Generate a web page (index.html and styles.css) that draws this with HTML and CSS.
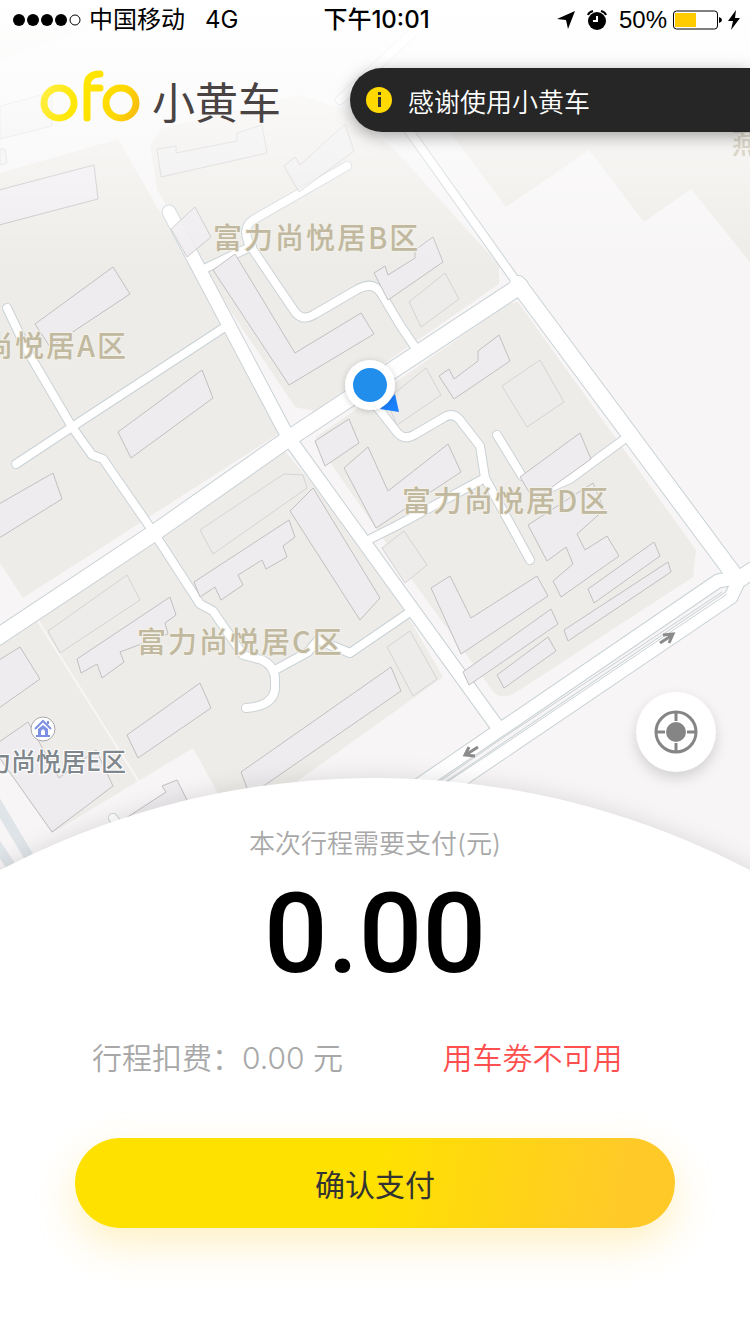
FILE: index.html
```
<!DOCTYPE html>
<html lang="zh-CN">
<head>
    <meta charset="UTF-8">
    <meta name="viewport" content="width=device-width, initial-scale=1.0">
    <title>ofo 小黄车</title>
    <link rel="stylesheet" href="styles.css">
</head>
<body>
    <main class="app">
        <!-- Map -->
        <svg class="map" viewBox="0 0 750 900" preserveAspectRatio="xMidYMin slice" role="img" aria-label="地图">
            <defs>
                <linearGradient id="fade" x1="0" y1="0" x2="0" y2="1">
                    <stop offset="0" stop-color="#fff" />
                    <stop offset="0.25" stop-color="#fff" stop-opacity="0.8" />
                    <stop offset="1" stop-color="#fff" stop-opacity="0" />
                </linearGradient>
                <filter id="soft" x="-30%" y="-30%" width="160%" height="160%">
                    <feDropShadow dx="0" dy="1" stdDeviation="3" flood-opacity="0.2" />
                </filter>
                <g id="main-roads">
                    <path d="M-10 642L154 533L288 439L520 286" />
                    <path d="M518 284L738 580L765 562" />
                </g>
                <g id="side-roads">
                    <path d="M169 212L288 437L499 729" />
                    <path d="M735 578L718 581L400 798" />
                    <path d="M740 578L731 597L430 801" />
                </g>
                <g id="lanes">
                    <path d="M375 83L518 284" />
                    <path d="M340 100L470 -20" />
                    <path d="M7 308L28 352L72 427L92 455L103 459L154 533L200 604L213 611L243 655L262 660Q275 666 275 680V688Q274 706 246 708" />
                    <path d="M16 464L72 427L225 327" />
                    <path d="M275 670L308 652L318 640L350 653L410 612" />
                    <path d="M347 166L253 220Q242 227 249 244L293 309Q301 323 315 314L358 289Q373 281 381 293L400 325L417 350" />
                    <path d="M252 246L206 268" />
                    <path d="M370 398L396 431Q403 441 414 435L443 418Q452 412 459 419L480 446L485 478L530 560" />
                    <path d="M366 541L396 526L485 478" />
                    <path d="M497 435L522 476" />
                    <path d="M545 490L570 479L630 435" />
                    <path d="M113 818L140 852" />
                </g>
            </defs>

            <rect class="ground" width="750" height="900" />

            <!-- Residential blocks -->
            <g class="block">
                <path d="M0 173L118 139L282 425Q282 432 275 436L23 598L0 563Z" />
                <path d="M150 145L162 128L300 95L345 110L395 150L499 265V284L315 411L295 407L230 310L157 190Z" />
                <path d="M0 646L38 621L284 450L372 555L443 677L285 790L220 797L193 748L52 833L0 760Z" />
                <path d="M508 304L518 302L696 550L693 577L515 693Q500 701 492 690L412 580L318 445L316 437L380 393Z" />
                <path d="M415 85L506 207L589 150L644 222L691 189L750 262V85Z" />
                <path d="M0 0H170L0 60Z" />
            </g>
            <path class="seam" d="M38 621L139 782" />
            <path class="rail" d="M-5 800L32 862M-10 835L15 872" />

            <!-- Roads: casing first, white fill on top -->
            <g class="casing">
                <use href="#lanes" stroke-width="10" />
                <use href="#side-roads" stroke-width="15" />
                <use href="#main-roads" stroke-width="18" />
            </g>
            <g class="road">
                <use href="#lanes" stroke-width="8" />
                <use href="#side-roads" stroke-width="13" />
                <use href="#main-roads" stroke-width="16" />
            </g>
            <path class="divider" d="M436 784L501 739L722 592M444 784L503 745L727 594" />

            <!-- Buildings -->
            <g class="building">
                <path d="M0 106L52 92V126L0 139Z" opacity="0.5" />
                <path d="M0 149H5L7 163L0 165Z" opacity="0.5" />
                <path d="M-1 190L94 165L98 199L-1 225Z" />
                <path d="M157 149L176 146V153L237 141V133L262 125L267 153L161 177Z" opacity="0.7" />
                <path d="M284 166L295 157L300 165L345 124L354 151L299 192Z" opacity="0.7" />
                <path d="M171 229L195 207L211 237L187 257Z" opacity="0.9" />
                <path d="M35 324L113 267L130 294L50 347Z" />
                <path d="M118 432L202 370L213 398L131 458Z" />
                <path d="M-1 504L53 473L62 499L-1 538Z" />
                <path d="M213 270L235 254L295 353L361 313L374 334L289 385Z" />
                <path d="M374 273L385 266L388 275L415 258V250L433 237L443 262L388 300Z" />
                <path d="M439 376L449 369L454 379L478 361V351L499 335L510 361L454 399Z" />
                <path d="M315 441L349 419L359 443L325 466Z" />
                <path d="M344 468L368 447L388 491L448 444L461 472L376 528Z" />
                <path d="M520 477L580 433L591 459L534 500Z" />
                <path d="M528 525L593 483L604 510L577 534L585 550L607 536L619 556L561 597L553 581L573 564L566 547L547 561Z" />
                <path d="M588 589L654 542L660 556L594 603Z" />
                <path d="M564 630L668 562L671 572L568 641Z" />
                <path d="M431 588L450 576L471 618L537 576L548 596L461 654Z" />
                <path d="M463 672L551 609L558 624L469 685Z" />
                <path d="M497 675L548 637L556 651L504 688Z" />
                <path d="M290 511L313 488L380 598L360 620Z" />
                <path d="M194 582L289 520L295 537L283 546L287 557L266 569L262 560L238 575L243 585L221 600L215 587L200 597Z" />
                <path d="M77 659L170 597L176 615L165 623L168 634L120 652L124 662L102 678L97 664L81 673Z" />
                <path d="M-1 660L20 647L40 679L-1 708Z" />
                <path d="M127 735L200 683L211 708L138 758Z" />
                <path d="M-1 742L28 722L59 778L96 750L113 786L52 832L-1 757Z" />
                <path d="M241 772L391 667L401 691L265 785L250 796Z" />
                <path d="M120 822L166 792L162 786L177 780L190 806L150 840Z" />
            </g>
            <g class="building faint">
                <path d="M409 302L445 273L459 299L421 327Z" />
                <path d="M386 400L426 368L441 395L397 425Z" />
                <path d="M502 386L540 360L564 402L527 427Z" />
                <path d="M200 530L284 474L303 475L307 488L213 554Z" />
                <path d="M48 631L127 575L140 600L60 653Z" />
                <path d="M382 548L404 531L427 565L405 583Z" />
                <path d="M387 647L410 631L437 679L413 696Z" />
            </g>

            <!-- One-way arrows -->
            <g class="arrow">
                <path d="M660 643L671 636" />
                <path d="M663 635L673 634L669 643" />
                <path d="M478 747L467 754" />
                <path d="M469 747L465 755L475 756" />
            </g>

            <rect width="750" height="270" fill="url(#fade)" />

            <!-- Place names -->
            <g class="place">
                <text x="213" y="249">富力尚悦居B区</text>
                <text x="402" y="512">富力尚悦居D区</text>
                <text x="137" y="653">富力尚悦居C区</text>
                <text x="128" y="357" text-anchor="end">富力尚悦居A区</text>
                <text x="732" y="154" opacity="0.5">燕</text>
            </g>
            <text class="poi" x="126" y="771" text-anchor="end">富力尚悦居E区</text>
            <g>
                <circle cx="43" cy="729" r="12" fill="#fff" stroke="#a9a9ad" />
                <path d="M35 729L43 721L51 729M48 724V721" fill="none" stroke="#7d90e4" stroke-width="2" />
                <path d="M38 729L43 725L48 729V735H50V737H36V735H38ZM41 735H45V731L43 729L41 731Z" fill="#7d90e4" fill-rule="evenodd" />
            </g>

            <!-- My location -->
            <path d="M399 412L380 409L395 394Z" fill="#1a80ff" />
            <circle cx="370" cy="385" r="25" fill="#fff" filter="url(#soft)" />
            <circle cx="370" cy="385" r="17" fill="#218eec" />
        </svg>

        <header class="status-bar">
            <div class="carrier">
                <svg width="68" height="12" viewBox="0 0 68 12" aria-hidden="true">
                    <circle cx="6" cy="6" r="6" />
                    <circle cx="20" cy="6" r="6" />
                    <circle cx="34" cy="6" r="6" />
                    <circle cx="48" cy="6" r="6" />
                    <circle cx="62" cy="6" r="5" fill="none" stroke="#000" />
                </svg>
                <span>中国移动</span>
                <span class="network">4G</span>
            </div>
            <time class="clock">下午10:01</time>
            <div class="power">
                <svg width="18" height="18" viewBox="0 0 18 18" aria-hidden="true">
                    <path d="M18 0L11 18L9 9L0 8Z" />
                </svg>
                <svg class="alarm" width="20" height="20" viewBox="0 0 20 20" aria-hidden="true">
                    <circle cx="10" cy="11" r="9" />
                    <path d="M1 5Q2 2 6 1M19 5Q18 2 14 1" fill="none" stroke="#000" stroke-width="2" />
                    <path d="M10 6V11H6" fill="none" stroke="#fff" stroke-width="2" />
                </svg>
                <span class="percent">50%</span>
                <svg width="49" height="20" viewBox="0 0 49 20" aria-hidden="true">
                    <rect x="0.5" y="1" width="44" height="18" rx="3" fill="#fff" stroke="#000" />
                    <rect x="2" y="3" width="21" height="14" fill="#fc0" />
                    <path d="M46 7Q49 8 49 10T46 13Z" />
                </svg>
                <svg width="12" height="20" viewBox="0 0 12 20" aria-hidden="true">
                    <path d="M8 0L0 11H5L3 20L12 8H7Z" />
                </svg>
            </div>
        </header>

        <div class="top-bar">
            <div class="brand">
                <svg width="102" height="60" viewBox="0 0 102 60" role="img" aria-label="ofo">
                    <defs>
                        <linearGradient id="gold" gradientUnits="userSpaceOnUse" x1="0" y1="10" x2="102" y2="50">
                            <stop offset="0" stop-color="#fff04d" />
                            <stop offset="0.4" stop-color="#ffe600" />
                            <stop offset="0.75" stop-color="#ffd800" />
                            <stop offset="1" stop-color="#f4b413" />
                        </linearGradient>
                    </defs>
                    <g fill="none" stroke="url(#gold)" stroke-width="7" stroke-linecap="round">
                        <circle cx="19" cy="33" r="15" />
                        <circle cx="81" cy="33" r="15" />
                        <path d="M47 48V16Q47 4 60 4M47 18H60" />
                    </g>
                </svg>
                <span class="brand-name">小黄车</span>
            </div>
            <div class="toast" role="status">
                <svg width="26" height="26" viewBox="0 0 26 26" aria-hidden="true">
                    <circle cx="13" cy="13" r="13" fill="#ffd900" />
                    <path d="M12 5H15V8H12ZM12 10H15V20H12Z" fill="#333" />
                </svg>
                <span>感谢使用小黄车</span>
            </div>
        </div>

        <div class="map-tools">
            <button class="locate" type="button" aria-label="定位">
                <svg width="44" height="44" viewBox="0 0 44 44" fill="none" stroke="#858585" aria-hidden="true">
                    <circle cx="22" cy="22" r="20" stroke-width="3" />
                    <circle cx="22" cy="22" r="10" fill="#858585" stroke="none" />
                    <path d="M22 2V11M22 33V42M2 22H11M33 22H42" stroke-width="3" />
                </svg>
            </button>
        </div>

        <section class="panel">
            <h1 class="panel-title">本次行程需要支付(元)</h1>
            <p class="amount">0.00</p>
            <div class="details">
                <span class="fee">行程扣费：0.00 元</span>
                <span class="coupon">用车劵不可用</span>
            </div>
            <button class="pay" type="button">确认支付</button>
        </section>
    </main>
</body>
</html>
```
FILE: styles.css
```
* {
    box-sizing: border-box;
}
body {
    margin: 0;
    font-family: Inter, "Noto Sans CJK SC", sans-serif;
    color: #000;
}
button {
    border: none;
    font-family: inherit;
    cursor: pointer;
}
.app {
    position: relative;
    z-index: 0;
    display: flex;
    flex-direction: column;
    min-height: 100vh;
    overflow: hidden;
    background-color: #f6f5f5;
}

/* Map */
.map {
    position: absolute;
    top: 0;
    left: 0;
    z-index: -2;
    width: 100%;
}
.ground {
    fill: #f7f5f5;
}
.block {
    fill: #eeece8;
}
.seam {
    stroke: #f8f7f6;
    stroke-width: 2;
}
.rail {
    stroke: #dfe4e8;
    stroke-width: 10;
}
.casing, .road {
    fill: none;
    stroke-linecap: round;
    stroke-linejoin: round;
}
.casing {
    stroke: #c9d2d6;
}
.road {
    stroke: #fff;
}
.divider {
    fill: none;
    stroke: #c9d0d2;
}
.building {
    fill: #efecef;
    stroke: #c2bfc1;
}
.faint {
    fill: #eeebeb;
    stroke: #d6d3d5;
}
.arrow {
    fill: none;
    stroke: #8b8b8b;
    stroke-width: 3;
}
.place, .poi {
    font-family: "Noto Sans CJK SC", sans-serif;
    font-weight: 500;
    paint-order: stroke;
    stroke: #f3f1ea;
    stroke-width: 2px;
}
.place {
    font-size: 29px;
    letter-spacing: 2px;
    fill: #c1b99f;
}
.poi {
    font-size: 25px;
    fill: #7f878d;
    stroke: #fff;
}

/* Status bar */
.status-bar {
    display: grid;
    grid-template-columns: 1fr auto 1fr;
    align-items: center;
    height: 40px;
    padding: 0 10px 0 13px;
    font-size: 24px;
    line-height: 40px;
}
.carrier, .power {
    display: flex;
    align-items: center;
    gap: 8px;
}
.power {
    justify-content: flex-end;
    gap: 6px;
}
.network {
    margin-left: 12px;
}
.clock {
    font-weight: 500;
}
.alarm {
    margin: 0 6px;
}
.percent {
    font-family: "Liberation Sans", sans-serif;
}

/* Logo and toast */
.top-bar {
    display: flex;
    justify-content: space-between;
    align-items: center;
    margin-top: 28px;
    padding-left: 40px;
}
.brand {
    display: flex;
    align-items: center;
    gap: 10px;
}
.brand-name {
    font-family: "Noto Sans CJK SC", sans-serif;
    font-size: 43px;
    line-height: 64px;
    color: #4a4343;
}
.toast {
    display: flex;
    align-items: center;
    gap: 16px;
    flex: 0 1 400px;
    height: 64px;
    padding-left: 16px;
    border-radius: 32px 0 0 32px;
    background-color: #262626;
    box-shadow: 0 4px 16px rgba(0, 0, 0, 0.35);
    font-family: "Noto Sans CJK SC", sans-serif;
    font-size: 26px;
    font-weight: 350;
    color: #fff;
}

/* Map controls */
.map-tools {
    display: flex;
    flex: 1;
    justify-content: flex-end;
    align-items: flex-end;
    padding: 0 34px 6px;
}
.locate {
    display: flex;
    justify-content: center;
    align-items: center;
    width: 80px;
    height: 80px;
    padding: 0;
    border-radius: 50%;
    background-color: #fff;
    box-shadow: 0 6px 14px rgba(0, 0, 0, 0.15);
}

/* Payment panel */
.panel {
    position: relative;
    padding: 48px 60px 106px;
    text-align: center;
}
.panel::before {
    content: "";
    position: absolute;
    top: 0;
    left: 50%;
    z-index: -1;
    width: 1620px;
    height: 1620px;
    margin-left: -810px;
    border-radius: 50%;
    background-color: #fff;
    box-shadow: 0 0 24px rgba(0, 0, 0, 0.12);
}
.panel-title {
    margin: 0;
    font-size: 26px;
    font-weight: 350;
    line-height: 36px;
    color: #a8a8a8;
}
.amount {
    margin: 24px 0 0;
    font-family: Roboto, sans-serif;
    font-size: 112px;
    font-weight: 500;
    line-height: 96px;
}
.details {
    display: grid;
    grid-template-columns: 1fr 1fr;
    margin-top: 56px;
    font-size: 30px;
    font-weight: 350;
    line-height: 40px;
}
.fee {
    color: #a8a8a8;
}
.coupon {
    color: #ff5050;
}
.pay {
    display: block;
    width: calc(100% - 30px);
    height: 90px;
    margin: 60px auto 0;
    border-radius: 45px;
    background: linear-gradient(100deg, #ffe100 50%, #ffca28 90%);
    box-shadow: 0 16px 40px rgba(255, 202, 40, 0.28);
    font-size: 30px;
    color: #333;
}
```
